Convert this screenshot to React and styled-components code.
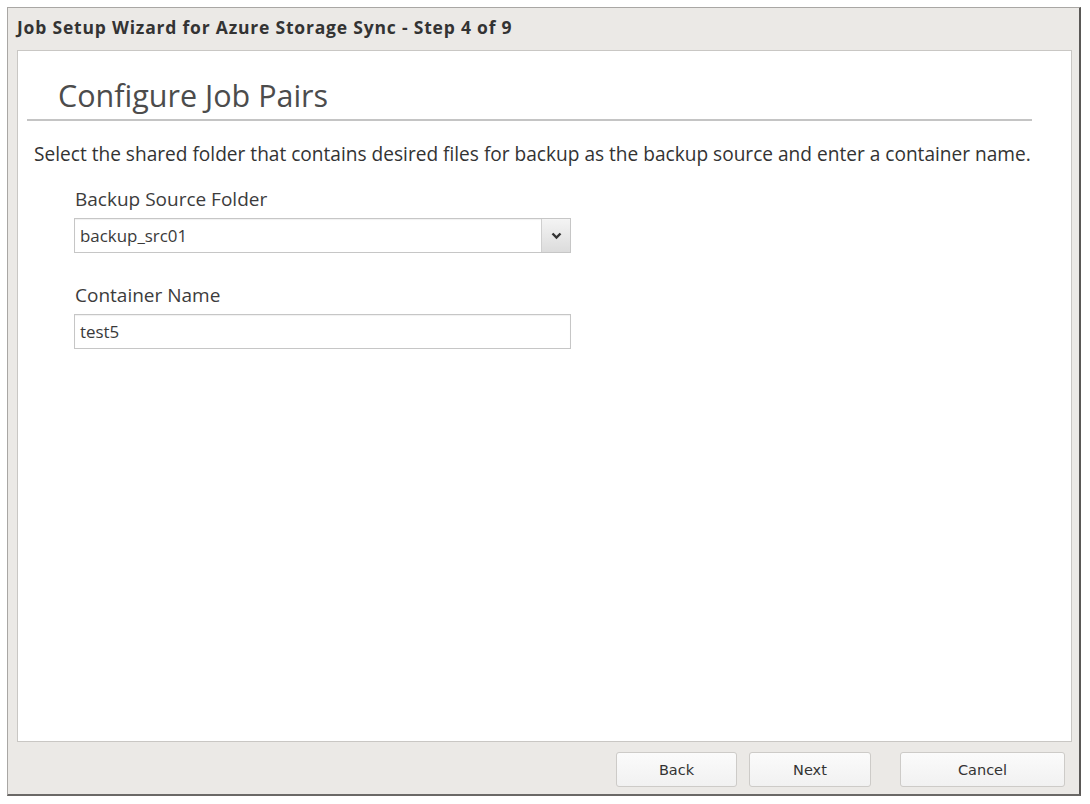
import React from "react";
import styled, { createGlobalStyle } from "styled-components";

const GlobalStyle = createGlobalStyle`
    html, body {
        margin: 0;
        padding: 0;
        background: #ffffff;
    }
    body {
        font-family: "Open Sans", "DejaVu Sans", sans-serif;
    }
`;

const Window = styled.div`
    box-sizing: border-box;
    margin: 7px 0 0 7px;
    width: 1074px;
    height: 789px;
    display: flex;
    flex-direction: column;
    background: #ebe9e6;
    border: 1px solid #a9a7a4;
    border-right: 2px solid #5a5856;
    border-bottom: 2px solid #6a6866;
`;

const TitleBar = styled.div`
    height: 42px;
    flex: none;
    display: flex;
    align-items: center;
    padding: 0 0 4px 9px;
    box-sizing: border-box;
    font-size: 17.5px;
    letter-spacing: 0.8px;
    font-weight: 700;
    color: #333;
`;

const Panel = styled.div`
    flex: 1;
    margin: 0 7px 0 9px;
    background: #fff;
    border: 1px solid #c9c7c4;
    box-sizing: border-box;
    display: flex;
    flex-direction: column;
    padding: 26px 0 0 0;
`;

const Heading = styled.h1`
    margin: 0 0 0 40px;
    font-size: 30.5px;
    font-weight: 400;
    color: #4c4c4c;
    line-height: 36px;
`;

const Rule = styled.hr`
    margin: 6px 39px 0 9px;
    border: none;
    border-top: 2px solid #c4c4c4;
`;

const Description = styled.p`
    margin: 21px 0 0 16px;
    font-size: 19.1px;
    color: #333;
    line-height: 24px;
`;

const Field = styled.div`
    margin: ${(p) => p.$top}px 0 0 56px;
    width: 497px;
    display: flex;
    flex-direction: column;
`;

const Label = styled.label`
    font-size: 19px;
    color: #3c3c3c;
    line-height: 24px;
    margin: 0 0 7px 1px;
`;

const Box = styled.div`
    box-sizing: border-box;
    height: 35px;
    border: 1px solid #c6c6c6;
    background: #fff;
    display: flex;
    align-items: stretch;
    box-shadow: inset 0 1px 1px rgba(0, 0, 0, 0.06);
`;

const Value = styled.span`
    flex: 1;
    display: flex;
    align-items: center;
    padding-left: 5px;
    font-size: 16.9px;
    color: #3a3a3a;
`;

const ArrowCell = styled.span`
    width: 28px;
    border-left: 1px solid #cfcfcf;
    background: linear-gradient(#f4f4f4, #dcdcdc);
    display: flex;
    align-items: center;
    justify-content: center;
`;

const Footer = styled.div`
    height: 52px;
    flex: none;
    display: flex;
    justify-content: flex-end;
    align-items: flex-start;
    padding: 10px 14px 0 0;
    box-sizing: border-box;
`;

const Button = styled.button`
    box-sizing: border-box;
    width: ${(p) => p.$w}px;
    height: 35px;
    margin-left: ${(p) => p.$gap}px;
    border: 1px solid #cdcbc8;
    border-radius: 3px;
    background: linear-gradient(#fbfbfb, #f1f1f1);
    font-family: "DejaVu Sans", sans-serif;
    font-size: 14.5px;
    color: #333;
    cursor: pointer;
`;

function Chevron() {
    return (
        <svg width="11" height="8" viewBox="0 0 11 8">
            <path d="M1.5 1.5 L5.5 5.5 L9.5 1.5" fill="none" stroke="#333" strokeWidth="2.4" />
        </svg>
    );
}

export default function App() {
    return (
        <>
            <GlobalStyle />
            <Window>
                <TitleBar>Job Setup Wizard for Azure Storage Sync - Step 4 of 9</TitleBar>
                <Panel>
                    <Heading>Configure Job Pairs</Heading>
                    <Rule />
                    <Description>
                        Select the shared folder that contains desired files for backup as the backup source and enter a container name.
                    </Description>
                    <Field $top={21}>
                        <Label>Backup Source Folder</Label>
                        <Box>
                            <Value>backup_src01</Value>
                            <ArrowCell>
                                <Chevron />
                            </ArrowCell>
                        </Box>
                    </Field>
                    <Field $top={30}>
                        <Label>Container Name</Label>
                        <Box>
                            <Value>test5</Value>
                        </Box>
                    </Field>
                </Panel>
                <Footer>
                    <Button $w={121} $gap={0}>Back</Button>
                    <Button $w={122} $gap={12}>Next</Button>
                    <Button $w={165} $gap={29}>Cancel</Button>
                </Footer>
            </Window>
        </>
    );
}
